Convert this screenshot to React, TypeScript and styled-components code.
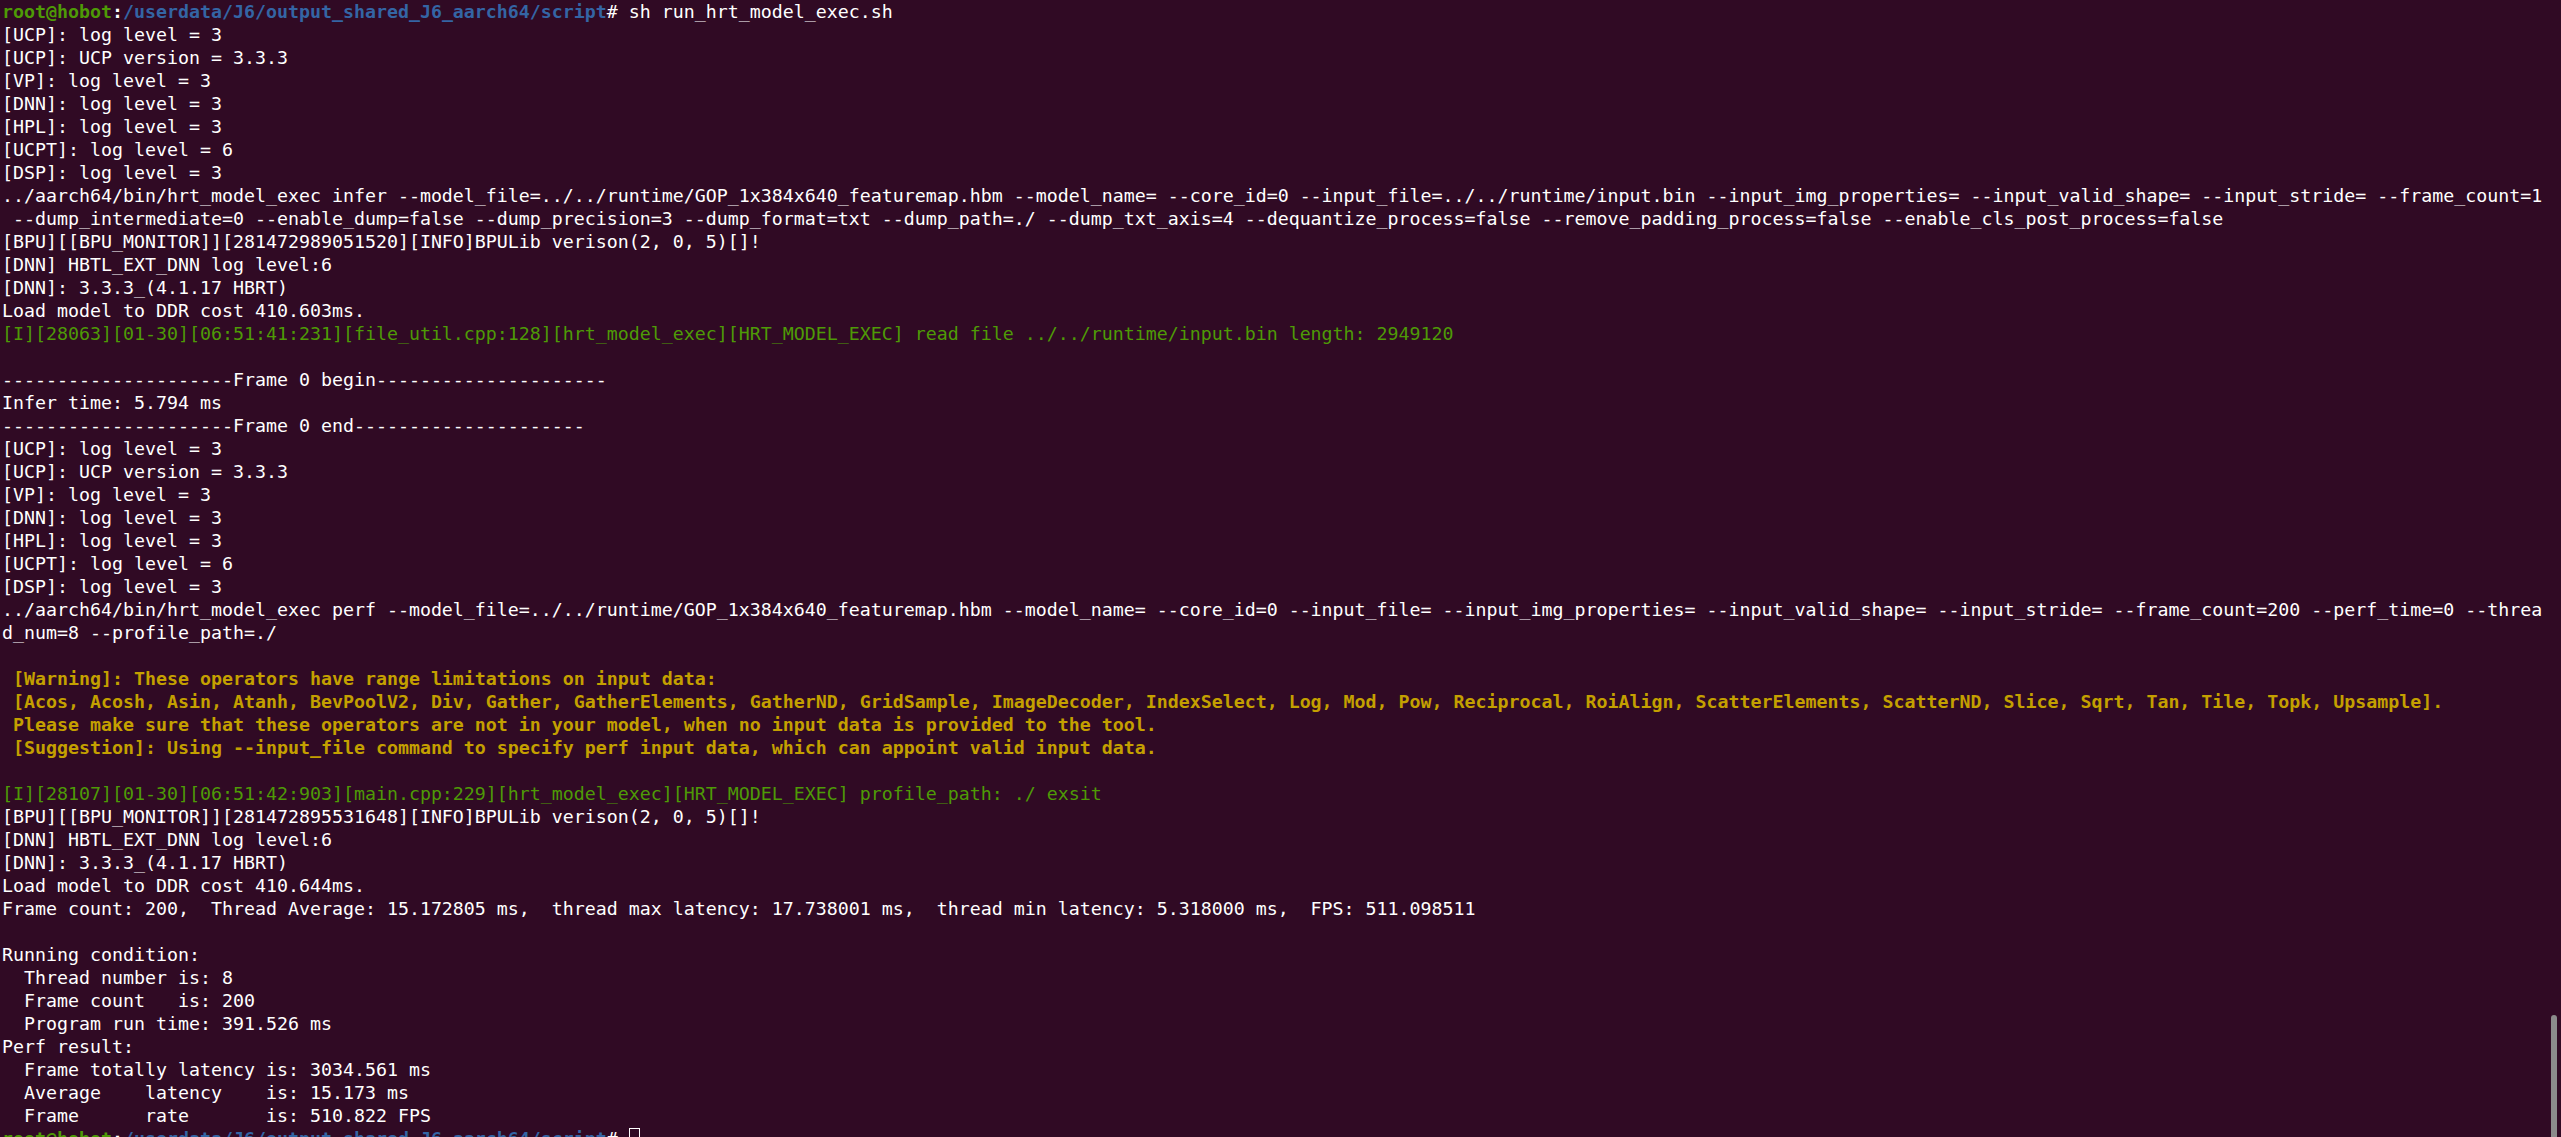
import React from 'react';
import styled, { createGlobalStyle } from 'styled-components';

type Tone = 'plain' | 'info' | 'warn';

const GlobalStyle = createGlobalStyle`
  html,
  body {
    margin: 0;
    padding: 0;
    height: 100%;
    background: #300a24;
    overflow: hidden;
  }
`;

const palette = {
  bg: '#300a24',
  fg: '#ffffff',
  green: '#4e9a06',
  blue: '#3465a4',
  yellow: '#c4a000',
  thumb: '#8b8b8b',
};

const toneColor: Record<Tone, string> = {
  plain: palette.fg,
  info: palette.green,
  warn: palette.yellow,
};

const RUN_INFER =
  '../aarch64/bin/hrt_model_exec infer --model_file=../../runtime/GOP_1x384x640_featuremap.hbm --model_name= --core_id=0 --input_file=../../runtime/input.bin --input_img_properties= --input_valid_shape= --input_stride= --frame_count=1';
const RUN_INFER_2 =
  ' --dump_intermediate=0 --enable_dump=false --dump_precision=3 --dump_format=txt --dump_path=./ --dump_txt_axis=4 --dequantize_process=false --remove_padding_process=false --enable_cls_post_process=false';
const RUN_PERF =
  '../aarch64/bin/hrt_model_exec perf --model_file=../../runtime/GOP_1x384x640_featuremap.hbm --model_name= --core_id=0 --input_file= --input_img_properties= --input_valid_shape= --input_stride= --frame_count=200 --perf_time=0 --threa';

const logLevels: [string, Tone][] = [
  ['[UCP]: log level = 3', 'plain'],
  ['[UCP]: UCP version = 3.3.3', 'plain'],
  ['[VP]: log level = 3', 'plain'],
  ['[DNN]: log level = 3', 'plain'],
  ['[HPL]: log level = 3', 'plain'],
  ['[UCPT]: log level = 6', 'plain'],
  ['[DSP]: log level = 3', 'plain'],
];

const dashes = '-'.repeat(21);

const output: [string, Tone][] = [
  ...logLevels,
  [RUN_INFER, 'plain'],
  [RUN_INFER_2, 'plain'],
  ['[BPU][[BPU_MONITOR]][281472989051520][INFO]BPULib verison(2, 0, 5)[]!', 'plain'],
  ['[DNN] HBTL_EXT_DNN log level:6', 'plain'],
  ['[DNN]: 3.3.3_(4.1.17 HBRT)', 'plain'],
  ['Load model to DDR cost 410.603ms.', 'plain'],
  [
    '[I][28063][01-30][06:51:41:231][file_util.cpp:128][hrt_model_exec][HRT_MODEL_EXEC] read file ../../runtime/input.bin length: 2949120',
    'info',
  ],
  ['', 'plain'],
  [`${dashes}Frame 0 begin${dashes}`, 'plain'],
  ['Infer time: 5.794 ms', 'plain'],
  [`${dashes}Frame 0 end${dashes}`, 'plain'],
  ...logLevels,
  [RUN_PERF, 'plain'],
  ['d_num=8 --profile_path=./', 'plain'],
  ['', 'plain'],
  [' [Warning]: These operators have range limitations on input data:', 'warn'],
  [
    ' [Acos, Acosh, Asin, Atanh, BevPoolV2, Div, Gather, GatherElements, GatherND, GridSample, ImageDecoder, IndexSelect, Log, Mod, Pow, Reciprocal, RoiAlign, ScatterElements, ScatterND, Slice, Sqrt, Tan, Tile, Topk, Upsample].',
    'warn',
  ],
  [
    ' Please make sure that these operators are not in your model, when no input data is provided to the tool.',
    'warn',
  ],
  [
    ' [Suggestion]: Using --input_file command to specify perf input data, which can appoint valid input data.',
    'warn',
  ],
  ['', 'plain'],
  [
    '[I][28107][01-30][06:51:42:903][main.cpp:229][hrt_model_exec][HRT_MODEL_EXEC] profile_path: ./ exsit',
    'info',
  ],
  ['[BPU][[BPU_MONITOR]][281472895531648][INFO]BPULib verison(2, 0, 5)[]!', 'plain'],
  ['[DNN] HBTL_EXT_DNN log level:6', 'plain'],
  ['[DNN]: 3.3.3_(4.1.17 HBRT)', 'plain'],
  ['Load model to DDR cost 410.644ms.', 'plain'],
  [
    'Frame count: 200,  Thread Average: 15.172805 ms,  thread max latency: 17.738001 ms,  thread min latency: 5.318000 ms,  FPS: 511.098511',
    'plain',
  ],
  ['', 'plain'],
  ['Running condition:', 'plain'],
  ['  Thread number is: 8', 'plain'],
  ['  Frame count   is: 200', 'plain'],
  ['  Program run time: 391.526 ms', 'plain'],
  ['Perf result:', 'plain'],
  ['  Frame totally latency is: 3034.561 ms', 'plain'],
  ['  Average    latency    is: 15.173 ms', 'plain'],
  ['  Frame      rate       is: 510.822 FPS', 'plain'],
];

const Prompt = ({ command, cursor }: { command?: string; cursor?: boolean }) => (
  <Line $tone="plain">
    <User>root@hobot</User>
    <Colon>:</Colon>
    <Path>/userdata/J6/output_shared_J6_aarch64/script</Path>
    {'# '}
    {command}
    {cursor ? <Cursor /> : null}
  </Line>
);

const App = () => {
  return (
    <Window>
      <GlobalStyle />
      <Output>
        <Prompt command="sh run_hrt_model_exec.sh" />
        {output.map(([text, tone], i) => (
          <Line key={i} $tone={tone}>
            {text}
          </Line>
        ))}
        <Prompt cursor />
      </Output>
      <ScrollTrack>
        <ScrollThumb />
      </ScrollTrack>
    </Window>
  );
};

const Window = styled.div`
  display: flex;
  width: 2561px;
  height: 1137px;
  overflow: hidden;
  background: ${palette.bg};
`;

const Output = styled.div`
  flex: 1;
  padding: 0 0 0 2px;
  font-family: 'DejaVu Sans Mono', 'Liberation Mono', monospace;
  font-size: 18.27px;
  line-height: 23px;
  color: ${palette.fg};
  white-space: pre;
`;

const Line = styled.div<{ $tone: Tone }>`
  height: 23px;
  color: ${({ $tone }) => toneColor[$tone]};
  font-weight: ${({ $tone }) => ($tone === 'warn' ? 700 : 400)};
`;

const User = styled.span`
  color: ${palette.green};
  font-weight: 700;
`;

const Colon = styled.span`
  font-weight: 700;
`;

const Path = styled.span`
  color: ${palette.blue};
  font-weight: 700;
`;

const Cursor = styled.span`
  display: inline-block;
  width: 9px;
  height: 19px;
  vertical-align: -4px;
  border: 1px solid ${palette.fg};
`;

const ScrollTrack = styled.div`
  display: flex;
  flex-direction: column;
  justify-content: flex-end;
  width: 6px;
  padding-right: 4px;
`;

const ScrollThumb = styled.div`
  height: 122px;
  background: ${palette.thumb};
  border-radius: 3px 3px 0 0;
`;

export default App;
